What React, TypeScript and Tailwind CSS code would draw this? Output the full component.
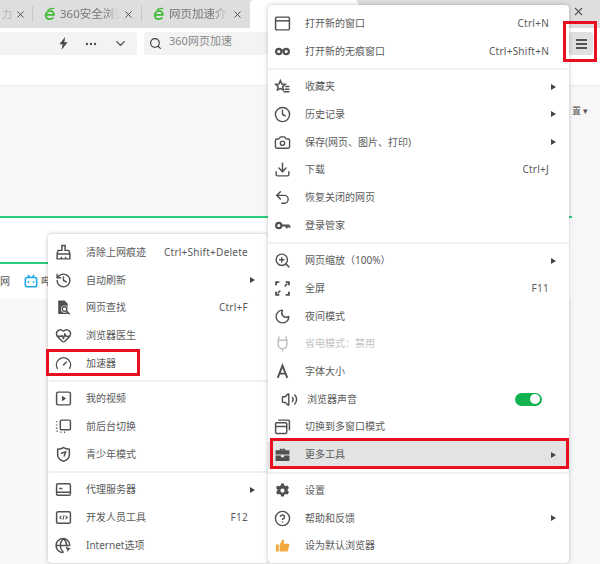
import type { ReactNode } from "react";
import { Camera, ChevronDown, Clock, Download, Ellipsis, CircleHelp, Moon, Search, Undo2, Volume2, X, ZoomIn, History, HeartPulse, Gauge } from "lucide-react";

const font = "font-['Noto_Sans','Noto_Sans_CJK_SC',sans-serif]";
const ic = "w-[17px] h-[17px] text-[#505050]";

function Svg({ children, fill = "none" }: { children: ReactNode; fill?: string }) {
  return (
    <svg viewBox="0 0 16 16" fill={fill} stroke={fill === "none" ? "currentColor" : "none"} strokeWidth="1.4" className={ic}>
      {children}
    </svg>
  );
}

function Row({ icon, label, right, arrow, muted, hover, sound }: { icon: ReactNode; label: string; right?: string; arrow?: boolean; muted?: boolean; hover?: boolean; sound?: boolean }) {
  return (
    <div className={`flex h-[27.7px] items-center ${hover ? "bg-[#e3e3e3]" : ""} ${muted ? "text-[#c2c2c2]" : "text-[#5a5a5a]"}`}>
      <div className={`flex w-[28px] shrink-0 justify-center ${sound ? "ml-[7px]" : ""}`}>{icon}</div>
      <span className={`text-[10px] whitespace-nowrap ${sound ? "ml-[4px]" : "ml-[9px]"}`}>{label}</span>
      {right && <span className="mr-[20px] ml-auto text-[10px] tracking-[0.25px]">{right}</span>}
      {arrow && <span className="mr-[13px] ml-auto h-0 w-0 border-y-[3.5px] border-l-[5px] border-y-transparent border-l-[#444]" />}
      {sound && (
        <span className="mr-[27px] ml-auto flex h-[13px] w-[27px] items-center justify-end rounded-full bg-[#12b34f] pr-[2px]">
          <span className="h-[10px] w-[10px] rounded-full bg-white" />
        </span>
      )}
    </div>
  );
}

const Sep = () => <div className="my-[3px] h-[2px] bg-[#efefef]" />;

function EIcon() {
  return (
    <svg viewBox="0 0 14 16" className="h-[15px] w-[12px]" fill="none" stroke="#3fbb33" strokeWidth="2">
      <path d="M2 8.500h9.500C11.500 5.500 9.500 3.800 7 3.800S2 6 2 9s2.200 4.500 4.600 4.500c2 0 3.400-.7 4.400-2" />
      <path d="M4 3C6 1.200 9 .6 12 1" strokeWidth="1.200" />
    </svg>
  );
}

function Tab({ label }: { label: string }) {
  return (
    <div className="flex h-[28px] w-[108px] shrink-0 items-center pl-[11px]">
      <EIcon />
      <span className="ml-[4px] w-[60px] text-[11.5px] whitespace-nowrap text-[#777] [mask-image:linear-gradient(90deg,#000_75%,transparent)]">{label}</span>
      <X className="ml-[3px] h-[11px] w-[11px] text-[#444]" />
    </div>
  );
}

export default function App() {
  return (
    <div className={`relative h-[564px] w-[600px] overflow-hidden bg-white ${font}`}>
      {/* tab strip */}
      <div className="flex h-[28px] items-center bg-[#dedede]">
        <div className="flex w-[32px] shrink-0 items-center justify-end pr-[6px]">
          <span className="mr-[3px] text-[10px] text-[#b5b5b5]">力</span>
          <X className="h-[11px] w-[11px] text-[#444]" />
        </div>
        <div className="h-[16px] w-px bg-[#c6c6c6]" />
        <Tab label="360安全浏览" />
        <div className="h-[16px] w-px bg-[#c6c6c6]" />
        <Tab label="网页加速介" />
        <div className="h-[28px] w-[108px] shrink-0 rounded-t-[4px] bg-white" />
        <X className="ml-[214px] h-[13px] w-[13px] -translate-y-[3px] text-[#555]" />
      </div>

      {/* address bar */}
      <div className="flex h-[58px] items-start border-b border-[#ededed] bg-white pt-[4px]">
        <div className="flex h-[23px] w-[137px] items-center justify-end rounded-r-[3px] bg-[#f3f3f3] pr-[9px] text-[#444]">
          <svg viewBox="0 0 12 16" className="mr-[15px] h-[13px] w-[11px]" fill="#444"><path d="M8 0 1 9h4l-1.500 7L11 6.500H7z" /></svg>
          <Ellipsis className="mr-[15px] h-[14px] w-[14px]" />
          <ChevronDown className="h-[15px] w-[15px]" />
        </div>
        <div className="ml-[7px] flex h-[23px] w-[424px] items-center overflow-hidden rounded-[3px] bg-[#f3f3f3] pl-[5px]">
          <Search className="h-[13px] w-[13px] text-[#333]" />
          <span className="mb-[6px] ml-[7px] text-[11px] leading-[14px] text-[#888]">360网页加速</span>
        </div>
        <div className="ml-[1px] flex h-[23px] w-[24px] flex-col items-center justify-center gap-[2px] rounded-[3px] bg-[#e0e0e0]">
          <span className="h-[2px] w-[11px] bg-[#555]" />
          <span className="h-[2px] w-[11px] bg-[#555]" />
          <span className="h-[2px] w-[11px] bg-[#555]" />
        </div>
      </div>

      {/* page */}
      <div className="flex h-[478px]">
        <div className="flex w-[572px] flex-col">
          <div className="h-[130px] bg-[#f7f7f7]" />
          <div className="h-[2px] bg-[#2bcb7f]" />
          <div className="flex h-[44px] items-start justify-end bg-white pr-[8px]">
            <span className="mr-[27px] mt-[12px] h-[4px] w-[4px] rounded-sm bg-[#f0955a]" />
          </div>
          <div className="h-[1.500px] w-[48px] bg-[#2bcb7f]" />
          <div className="flex h-[35px] items-center text-[10px] text-[#555]">
            <span>网</span>
            <svg viewBox="0 0 16 16" className="mr-[3px] ml-[14px] h-[14px] w-[14px]" fill="none" stroke="#1ea5e8" strokeWidth="1.800">
              <rect x="1.500" y="4" width="13" height="10.500" rx="2" />
              <path d="m4.500 1 2 3m5-3-2 3" />
              <path d="M5 8v2m6-2v2" />
            </svg>
            <span>哔</span>
          </div>
          <div className="flex-1 bg-[#f8f8f8]" />
        </div>
        <div className="flex flex-1 justify-start bg-[#f7f7f7] pt-[18px]">
          <span className="text-[9px] whitespace-nowrap text-[#555]">置 ▾</span>
        </div>
      </div>

      {/* left menu */}
      <div className="absolute top-[234px] left-[48px] h-[329px] w-[220px] rounded-[4px] bg-white pt-[4.500px] pl-[1px] shadow-[0_0_4px_rgba(0,0,0,0.25)]">
        <Row label="清除上网痕迹" right="Ctrl+Shift+Delete" icon={<Svg><path d="M6.500 1.500h3V6h3.500l1 3v5H2V9l1-3h3.500zM2 9.500h12M6 12v2m4-2v2" /></Svg>} />
        <Row label="自动刷新" arrow icon={<History className={ic} />} />
        <Row label="网页查找" right="Ctrl+F" icon={<Svg fill="#505050"><path d="M3 1.500h6l3 3V14H3z" /><circle cx="9" cy="9.500" r="3.500" fill="#fff" /><circle cx="9" cy="9.500" r="2.200" fill="none" stroke="#505050" strokeWidth="1.300" /><path d="m10.800 11.300 3 3" stroke="#505050" strokeWidth="1.500" /></Svg>} />
        <Row label="浏览器医生" icon={<HeartPulse className={ic} />} />
        <Row label="加速器" icon={<Gauge className={ic} />} />
        <Sep />
        <Row label="我的视频" icon={<Svg><rect x="1.500" y="2" width="13" height="12" rx="1.500" /><path d="M6.500 5.500v5l4-2.500z" fill="currentColor" stroke="none" /></Svg>} />
        <Row label="前后台切换" icon={<Svg><rect x="5" y="2" width="9.500" height="9" rx="1" /><path d="M1.500 3v1M1.500 6v1M1.500 9v1M1.500 12.500h1M5 13.500h1M8.500 13.500h1" /></Svg>} />
        <Row label="青少年模式" icon={<Svg><path d="M2.500 3C5 3 6.500 2.500 8 1.500 9.500 2.500 11 3 13.500 3v5.500c0 3-3 5-5.500 6-2.500-1-5.500-3-5.500-6z" /><path d="M5.500 7 10 5.500 8.500 10" /></Svg>} />
        <Sep />
        <Row label="代理服务器" arrow icon={<Svg><rect x="1.500" y="2.500" width="13" height="11" rx="1.500" /><path d="M1.500 10.500h13M4 7h3" /></Svg>} />
        <Row label="开发人员工具" right="F12" icon={<Svg><rect x="1.500" y="2.500" width="13" height="11" rx="1.500" /><path d="m6 6.500-1.500 1.500L6 9.500m4-3 1.500 1.500L10 9.500M8.500 6l-1 4" strokeWidth="1" /></Svg>} />
        <Row label="Internet选项" icon={<Svg><path d="M14 8a6.500 6.500 0 1 0-6 6.500M1.500 8H14M8 1.500c-4 4-4 9 0 13M8 1.500c2 2 3 4 3 6.500" /><path d="m10 9 5 2-2 1-1 2z" fill="#505050" stroke="none" /></Svg>} />
      </div>

      {/* main menu */}
      <div className="absolute top-[5px] left-[268px] h-[558px] w-[301px] rounded-[4px] bg-white pt-[4.500px] shadow-[0_0_4px_rgba(0,0,0,0.25)]">
        <Row label="打开新的窗口" right="Ctrl+N" icon={<Svg><rect x="1.500" y="2" width="13" height="12" rx="1" /><path d="M1.500 5.500h13" /></Svg>} />
        <Row label="打开新的无痕窗口" right="Ctrl+Shift+N" icon={<Svg><circle cx="4.500" cy="8" r="2.500" strokeWidth="2" /><circle cx="11.500" cy="8" r="2.500" strokeWidth="2" /><path d="M7 7h2" strokeWidth="2" /></Svg>} />
        <Sep />
        <Row label="收藏夹" arrow icon={<Svg><path d="m6 2.500 1.400 3.200 3 .3-2.300 2.100.7 3.200L6 10l-2.800 1.300.7-3.200L1.600 6l3-.3z" /><path d="M10.500 8h4M10 10.500h4.500M9 13h5.500" /></Svg>} />
        <Row label="历史记录" arrow icon={<Clock className={ic} />} />
        <Row label="保存(网页、图片、打印)" arrow icon={<Camera className={ic} />} />
        <Row label="下载" right="Ctrl+J" icon={<Download className={ic} />} />
        <Row label="恢复关闭的网页" icon={<Undo2 className={ic} />} />
        <Row label="登录管家" icon={<Svg><circle cx="4.500" cy="8" r="2.500" strokeWidth="2" /><path d="M7 8h7.500M12 8v2.500M14.500 8v2" strokeWidth="2" /></Svg>} />
        <Sep />
        <Row label="网页缩放（100%）" arrow icon={<ZoomIn className={ic} />} />
        <Row label="全屏" right="F11" icon={<Svg><path d="M2 5V2h3M14 5V2h-3M2 11v3h3M14 11v3h-3" strokeWidth="1.800" /><path d="m10 6 2.500-2.500M6 10l-2.500 2.500" /></Svg>} />
        <Row label="夜间模式" icon={<Moon className={ic} />} />
        <Row label="省电模式：禁用" muted icon={<svg viewBox="0 0 16 16" fill="none" stroke="#c2c2c2" strokeWidth="1.500" className="h-[17px] w-[17px]"><path d="M4.500 1.500V5M11.500 1.500V5M3 5h10M4 5v4a4 4 0 0 0 8 0V5M8 13v2.500" /></svg>} />
        <Row label="字体大小" icon={<Svg><path d="M3.500 14 8 2.500 12.500 14M5 10h6" strokeWidth="1.800" /></Svg>} />
        <Row label="浏览器声音" sound icon={<Volume2 className={ic} />} />
        <Row label="切换到多窗口模式" icon={<Svg><rect x="1.500" y="4.500" width="10.500" height="10" rx="1" /><path d="M1.500 8h10.500M4 2h9.500a1 1 0 0 1 1 1v8.500" /></Svg>} />
        <Row label="更多工具" arrow hover icon={<Svg fill="#505050"><path d="M5.500 4V2.500h5V4H14.500v4H1.500V4zM7 4h2V3.500H7zM1.500 9h5v1.500h3V9h5v5H1.500z" /></Svg>} />
        <Sep />
        <Row label="设置" icon={<Svg fill="#505050"><path fillRule="evenodd" d="m6.700 1.500h2.600l.4 1.800 1.300.7 1.800-.6 1.300 2.300-1.300 1.200v1.400l1.300 1.200-1.300 2.300-1.800-.6-1.300.7-.4 1.800H6.700l-.4-1.800-1.300-.7-1.800.6-1.300-2.300 1.300-1.200V7L1.900 5.700l1.300-2.300 1.800.6 1.300-.7zM8 6a2 2 0 1 0 0 4 2 2 0 0 0 0-4z" /></Svg>} />
        <Row label="帮助和反馈" arrow icon={<CircleHelp className={ic} />} />
        <Row label="设为默认浏览器" icon={<svg viewBox="0 0 16 16" fill="#f2a93b" className="h-[15px] w-[15px]"><path d="M1 7h3v7.500H1zM5 7l3-5.500c1.500 0 2 1 1.700 2.200L9.300 6H14c1 0 1.500 1 1.200 2l-1.500 5.500c-.2.700-.8 1-1.500 1H5z" /></svg>} />
      </div>

      {/* callouts */}
      <div className="absolute top-[21px] left-[563px] h-[41px] w-[34px] border-[3px] border-[#e8101f]" />
      <div className="absolute top-[349px] left-[46px] h-[27px] w-[94px] border-[3px] border-[#e8101f]" />
      <div className="absolute top-[438px] left-[270px] h-[31px] w-[299px] border-[3px] border-[#e8101f]" />
    </div>
  );
}
